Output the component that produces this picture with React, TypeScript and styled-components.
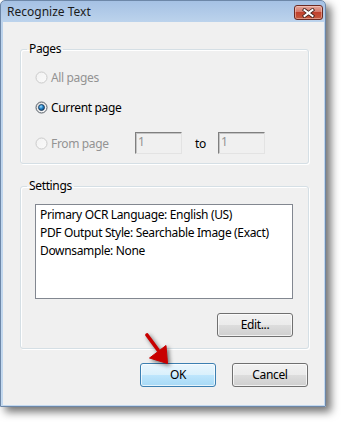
import React from "react";
import styled, { createGlobalStyle } from "styled-components";

const GlobalStyle = createGlobalStyle`
	html, body {
		margin: 0;
		padding: 0;
		background: #ffffff;
	}
	body {
		font-family: "Segoe UI", "Noto Sans", "Liberation Sans", sans-serif;
		font-size: 12px;
		letter-spacing: -0.35px;
		color: #000000;
	}
`;

const uiFont = `"Segoe UI", "Noto Sans", "Liberation Sans", sans-serif`;
const disabledText = "#939393";

const Stage = styled.div`
	position: relative;
	width: 342px;
	height: 423px;
	overflow: hidden;
	background: #ffffff;
`;

const Window = styled.div`
	width: 326px;
	height: 407px;
	box-sizing: border-box;
	display: flex;
	flex-direction: column;
	border: 1px solid #6d87a8;
	border-radius: 5px 5px 0 0;
	padding: 0 1px 1px 2px;
	background: linear-gradient(#a5c1e4, #bcd3ec 21px, #c4d9ef);
	box-shadow: 5px 5px 9px rgba(0, 0, 0, 0.55);
`;

const TitleBar = styled.div`
	height: 21px;
	flex: 0 0 auto;
	display: flex;
	align-items: flex-start;
	justify-content: space-between;
	padding-left: 4px;
`;

const Title = styled.div`
	font-family: ${uiFont};
	font-size: 12px;
	letter-spacing: 0;
	line-height: 21px;
	color: #1b1b1b;
`;

const CloseButton = styled.div`
	width: 29px;
	height: 15px;
	margin-top: 4px;
	margin-right: 1px;
	box-sizing: border-box;
	border: 1px solid #6b2a22;
	border-radius: 3px;
	background: linear-gradient(#e4a89c 0%, #d4786a 45%, #c1412d 50%, #c45a3f 100%);
	box-shadow: inset 0 0 0 1px rgba(255, 220, 210, 0.45);
	display: flex;
	align-items: center;
	justify-content: center;
`;

const Body = styled.div`
	flex: 1 1 auto;
	display: flex;
	flex-direction: column;
	background: #f0f0f0;
	padding: 20px 15px 0 17px;
`;

const GroupBox = styled.fieldset<{ $top?: number }>`
	margin: ${(p) => p.$top ?? 0}px 0 0 0;
	padding: 0;
	min-width: 0;
	border: 1px solid #d5dfe5;
	border-radius: 3px;
	box-shadow: 1px 1px 0 #ffffff, inset 1px 1px 0 #ffffff;
`;

const GroupLabel = styled.legend`
	font-family: ${uiFont};
	font-size: 12px;
	line-height: 14px;
	padding: 0 2px;
	margin-left: 6px;
	color: #000000;
`;

const PagesContent = styled.div`
	display: flex;
	flex-direction: column;
	padding: 11px 0 9px 14px;
`;

const OptionRow = styled.div<{ $height: number; $top?: number }>`
	display: flex;
	align-items: center;
	height: ${(p) => p.$height}px;
	margin-top: ${(p) => p.$top ?? 0}px;
`;

const OptionText = styled.span<{ $disabled?: boolean; $width?: number }>`
	font-family: ${uiFont};
	font-size: 12px;
	margin-left: 3px;
	color: ${(p) => (p.$disabled ? disabledText : "#000000")};
	width: ${(p) => (p.$width ? `${p.$width}px` : "auto")};
`;

const RangeBox = styled.div`
	width: 47px;
	height: 22px;
	box-sizing: border-box;
	border-style: solid;
	border-width: 1px;
	border-color: #7f7f7f #e3e3e3 #e3e3e3 #7f7f7f;
	box-shadow: inset 1px 1px 0 #c4c4c4;
	background: #f0f0f0;
	color: ${disabledText};
	font-family: ${uiFont};
	font-size: 12px;
	line-height: 18px;
	padding-left: 2px;
`;

const ToText = styled.span`
	font-family: ${uiFont};
	font-size: 12px;
	margin: 0 12px 0 13px;
`;

const SettingsContent = styled.div`
	display: flex;
	flex-direction: column;
	align-items: flex-end;
	padding: 11px 15px 11px 14px;
`;

const SettingsList = styled.div`
	align-self: stretch;
	height: 95px;
	box-sizing: border-box;
	border: 1px solid #828790;
	background: #ffffff;
	padding: 1px 4px;
`;

const ListLine = styled.div`
	font-family: ${uiFont};
	font-size: 12px;
	line-height: 18px;
	white-space: nowrap;
`;

const ButtonRow = styled.div`
	display: flex;
	justify-content: flex-end;
	gap: 16px;
	margin-top: 14px;
	padding-right: 1px;
`;

const Button = styled.div<{ $primary?: boolean; $top?: number }>`
	width: 76px;
	height: 24px;
	box-sizing: border-box;
	margin-top: ${(p) => p.$top ?? 0}px;
	border: 1px solid ${(p) => (p.$primary ? "#3c7fb1" : "#707070")};
	border-radius: 3px;
	background: ${(p) =>
		p.$primary
			? "linear-gradient(#eaf6fd 0%, #d9f0fc 50%, #bee6fd 50%, #a7d9f5 100%)"
			: "linear-gradient(#f2f2f2 0%, #ebebeb 50%, #dddddd 50%, #cfcfcf 100%)"};
	box-shadow: inset 0 0 0 1px rgba(255, 255, 255, 0.7);
	font-family: ${uiFont};
	font-size: 12px;
	line-height: 22px;
	text-align: center;
	color: #000000;
`;

const ArrowLayer = styled.svg`
	position: absolute;
	left: 140px;
	top: 330px;
	width: 40px;
	height: 40px;
	overflow: visible;
	filter: drop-shadow(2px 2px 2px rgba(0, 0, 0, 0.55));
`;

function Radio(props: { checked?: boolean; disabled?: boolean }) {
	const id = props.checked ? "radio-on" : "radio-off";
	return (
		<svg width="13" height="13" viewBox="0 0 13 13">
			<defs>
				<linearGradient id={id + "-bg"} x1="0" y1="0" x2="1" y2="1">
					<stop offset="0" stopColor={props.disabled ? "#f2f2f2" : "#dcdcdc"} />
					<stop offset="1" stopColor={props.disabled ? "#fafafa" : "#ffffff"} />
				</linearGradient>
				<radialGradient id="radio-dot" cx="0.4" cy="0.35" r="0.7">
					<stop offset="0" stopColor="#a6e0fb" />
					<stop offset="0.45" stopColor="#2a8ad0" />
					<stop offset="1" stopColor="#0c3f6e" />
				</radialGradient>
			</defs>
			<circle
				cx="6.5"
				cy="6.5"
				r="5.5"
				fill={`url(#${id}-bg)`}
				stroke={props.disabled ? "#cbcbcb" : "#555d66"}
				strokeWidth="1"
			/>
			{props.checked && (
				<circle cx="6.5" cy="6.5" r="3" fill="url(#radio-dot)" stroke="#1d3550" strokeWidth="0.8" />
			)}
		</svg>
	);
}

export default function App() {
	return (
		<Stage>
			<GlobalStyle />
			<Window>
				<TitleBar>
					<Title>Recognize Text</Title>
					<CloseButton>
						<svg width="13" height="10" viewBox="0 0 13 10">
							<path d="M2.5 2 L10.5 8 M10.5 2 L2.5 8" stroke="#3d1d18" strokeWidth="3.6" strokeLinecap="square" />
							<path d="M2.5 2 L10.5 8 M10.5 2 L2.5 8" stroke="#ffffff" strokeWidth="2" strokeLinecap="square" />
						</svg>
					</CloseButton>
				</TitleBar>
				<Body>
					<GroupBox>
						<GroupLabel>Pages</GroupLabel>
						<PagesContent>
							<OptionRow $height={20}>
								<Radio disabled />
								<OptionText $disabled>All pages</OptionText>
							</OptionRow>
							<OptionRow $height={20} $top={10}>
								<Radio checked />
								<OptionText>Current page</OptionText>
							</OptionRow>
							<OptionRow $height={22} $top={15}>
								<Radio disabled />
								<OptionText $disabled $width={84}>
									From page
								</OptionText>
								<RangeBox>1</RangeBox>
								<ToText>to</ToText>
								<RangeBox>1</RangeBox>
							</OptionRow>
						</PagesContent>
					</GroupBox>
					<GroupBox $top={15}>
						<GroupLabel>Settings</GroupLabel>
						<SettingsContent>
							<SettingsList>
								<ListLine>Primary OCR Language: English (US)</ListLine>
								<ListLine>PDF Output Style: Searchable Image (Exact)</ListLine>
								<ListLine>Downsample: None</ListLine>
							</SettingsList>
							<Button $top={14}>Edit...</Button>
						</SettingsContent>
					</GroupBox>
					<ButtonRow>
						<Button $primary>OK</Button>
						<Button>Cancel</Button>
					</ButtonRow>
				</Body>
			</Window>
			<ArrowLayer viewBox="0 0 40 40">
				<path d="M7 5 L18 20" stroke="#c80000" strokeWidth="3.6" strokeLinecap="round" />
				<path d="M26 15.5 L9.5 28 L27.5 33.5 Z" fill="#c80000" stroke="#c80000" strokeWidth="1" strokeLinejoin="round" />
			</ArrowLayer>
		</Stage>
	);
}
